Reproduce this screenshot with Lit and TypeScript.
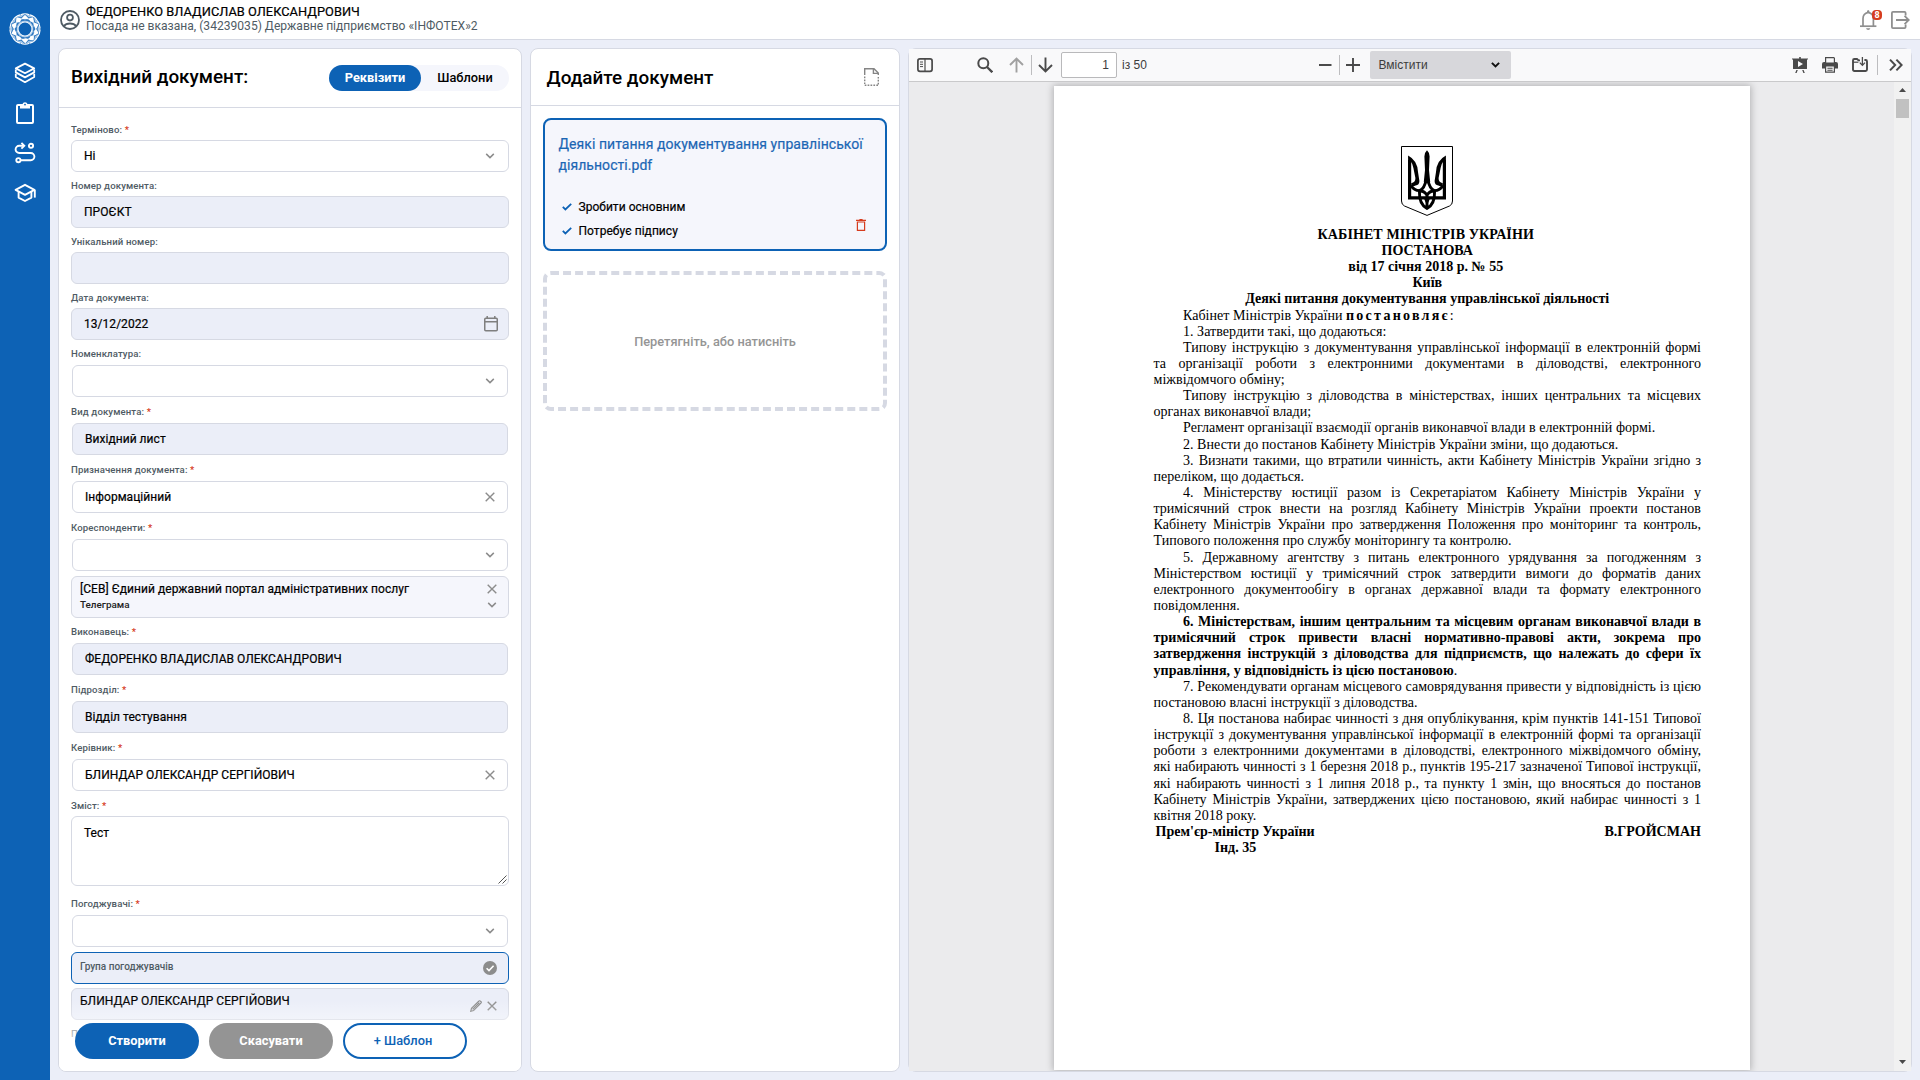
import { LitElement, html, css, svg, nothing, TemplateResult } from "lit";
import { customElement } from "lit/decorators.js";

const chevron = html`<svg class="chev" width="10" height="6" viewBox="0 0 10 6" fill="none" stroke="#8c8c8c" stroke-width="1.5"><path d="M1.2 .9 5 4.6 8.8 .9" /></svg>`;
const cross = html`<svg class="cross" width="10" height="10" viewBox="0 0 10 10" fill="none" stroke="#8c8c8c" stroke-width="1.4"><path d="M.7 .7 9.3 9.3M9.3 .7 .7 9.3" /></svg>`;
const calendar = html`<svg class="cal" width="14" height="16" viewBox="0 0 14 16" fill="none" stroke="#7f7f7f" stroke-width="1.5"><rect x=".75" y="2.2" width="12.5" height="12.6" rx="1" /><path d="M.7 5.8H13.3M3.2 0V2.5M10.8 0V2.5" /></svg>`;

type Kind = "input" | "select";
interface Field {
  label: string;
  required?: boolean;
  kind: Kind;
  value?: string;
  locked?: boolean;
  icon?: TemplateResult;
}

const FIELDS_TOP: Field[] = [
  { label: "Терміново", required: true, kind: "input", value: "Ні", icon: chevron },
  { label: "Номер документа", kind: "input", value: "ПРОЄКТ", locked: true },
  { label: "Унікальний номер", kind: "input", locked: true },
  { label: "Дата документа", kind: "input", value: "13/12/2022", locked: true, icon: calendar },
  { label: "Номенклатура", kind: "select", icon: chevron },
  { label: "Вид документа", required: true, kind: "select", value: "Вихідний лист", locked: true },
  { label: "Призначення документа", required: true, kind: "select", value: "Інформаційний", icon: cross },
  { label: "Кореспонденти", required: true, kind: "select", icon: chevron },
];

const FIELDS_MIDDLE: Field[] = [
  { label: "Виконавець", required: true, kind: "select", value: "ФЕДОРЕНКО ВЛАДИСЛАВ ОЛЕКСАНДРОВИЧ", locked: true },
  { label: "Підрозділ", required: true, kind: "select", value: "Відділ тестування", locked: true },
  { label: "Керівник", required: true, kind: "select", value: "БЛИНДАР ОЛЕКСАНДР СЕРГІЙОВИЧ", icon: cross },
];

@customElement("side-nav")
class SideNav extends LitElement {
  static styles = css`
    :host { display: flex; flex-direction: column; align-items: center; width: 50px; background: #0d62b5; padding-top: 13px; box-sizing: border-box; }
    .logo { display: block; width: 32px; height: 32px; margin-bottom: 8px; }
    .item { display: flex; align-items: center; justify-content: center; width: 50px; height: 40px; }
  `;
  render() {
    const ring = Array.from({ length: 10 }, (_, i) => i * 36);
    return html`
      <svg class="logo" viewBox="-16 -16 32 32" fill="none" stroke="#fff">
        <circle r="10.9" stroke="#a4c5e6" stroke-width="7.4" />
        ${ring.map((a) => svg`<g transform="rotate(${a})">
          <path d="M-4.4 -14.2Q0 -16.2 4.4 -14.2" stroke-width="1.2" />
          <path d="M-8.6 -11.8Q2.4 -12 8.8 -3.6" stroke="#2f79c0" stroke-width=".8" />
          <path d="M8.6 -11.8Q-2.4 -12 -8.8 -3.6" stroke="#2f79c0" stroke-width=".8" />
          <path d="M0 -14.4 3.4 -10.6 0 -8.4 -3.4 -10.6Z" fill="#fff" stroke="none" />
        </g>`)}
        <circle r="7" fill="#0d62b5" stroke="#f2f7fc" stroke-width="1.2" />
      </svg>
      <div class="item">
        <svg width="22" height="22" viewBox="0 0 22 22" fill="none" stroke="#fff" stroke-width="1.8" stroke-linejoin="round"><path d="M11 1.6 20.2 6.4 11 11.2 1.8 6.4Z" /><path d="M1.8 7.4V10.4L11 15.4 20.2 10.4V7.4" /><path d="M1.8 11.8V15L11 20.2 20.2 15V11.8" /></svg>
      </div>
      <div class="item">
        <svg width="20" height="24" viewBox="0 0 20 24" fill="none" stroke="#fff" stroke-width="2"><rect x="2" y="4" width="16" height="18" rx="1" /><path fill="#fff" stroke="none" d="M5 3.2H7.4A2.7 2.7 0 0 1 12.6 3.2H15V7.4H5Z" /><circle cx="10" cy="3.6" r=".9" fill="#0d62b5" stroke="none" /></svg>
      </div>
      <div class="item">
        <svg width="22" height="22" viewBox="0 0 22 22" fill="none" stroke="#fff" stroke-width="1.9"><path d="M9.6 3.8H5.2a3.6 3.6 0 0 0 0 7.2H16.8a3.6 3.6 0 0 1 0 7.2H7" /><path d="M7.4 .9 10.3 3.8 7.4 6.7" /><circle cx="17" cy="3.8" r="2.1" /><circle cx="4.4" cy="18.2" r="2.1" /></svg>
      </div>
      <div class="item">
        <svg width="24" height="20" viewBox="0 0 24 20" fill="none" stroke="#fff" stroke-width="1.9" stroke-linejoin="round"><path d="M12 1.8 2.6 6.8 12 11.8 21.4 6.8Z" /><path d="M5.6 9V14.6L12 18 18.4 14.6V9" /><path d="M21.8 6.8V14.6" /></svg>
      </div>
    `;
  }
}

@customElement("top-bar")
class TopBar extends LitElement {
  static styles = css`
    :host { display: flex; align-items: center; height: 40px; box-sizing: border-box; background: #fff; border-bottom: 1px solid #d6d9e3; padding: 0 10px; font-family: Roboto, "Liberation Sans", sans-serif; }
    .avatar { display: block; margin-right: 6px; }
    .who { display: flex; flex-direction: column; flex: 1; line-height: 15px; padding-bottom: 1px; }
    .name { font-size: 12.8px; letter-spacing: .04px; color: #000; -webkit-text-stroke: .2px #000; }
    .post { font-size: 12.08px; color: #4f5b64; }
    .bell { position: relative; width: 24px; height: 22px; margin-right: 7px; }
    .bell-icon { display: block; }
    .badge { position: absolute; left: 12px; top: 1px; width: 10px; height: 10px; border-radius: 4px; background: #d63c1e; color: #fff; font-size: 9px; font-weight: 700; line-height: 10px; text-align: center; }
    .exit { display: block; }
  `;
  render() {
    return html`
      <svg class="avatar" width="20" height="20" viewBox="0 0 20 20" fill="none" stroke="#4f5b64" stroke-width="1.8"><circle cx="10" cy="10" r="9" /><circle cx="10" cy="7.6" r="2.9" /><path d="M3.8 16.2C6.5 12.6 13.5 12.6 16.2 16.2" /></svg>
      <div class="who">
        <span class="name">ФЕДОРЕНКО ВЛАДИСЛАВ ОЛЕКСАНДРОВИЧ</span>
        <span class="post">Посада не вказана, (34239035) Державне підприємство «ІНФОТЕХ»2</span>
      </div>
      <div class="bell">
        <svg class="bell-icon" width="17" height="22" viewBox="0 0 17 22" fill="none" stroke="#8f8f8f" stroke-width="1.7"><path d="M3 17V9.5Q3 4.6 8.2 3.4 13.4 4.6 13.4 9.5V17" /><path d="M0 17.2H16.4" /><path d="M6 19.2H10.4Q10 21 8.2 21 6.4 21 6 19.2ZM6.8 3.6Q6.8 1 8.2 1 9.6 1 9.6 3.6Z" fill="#8f8f8f" stroke="none" /></svg>
        <span class="badge">8</span>
      </div>
      <svg class="exit" width="19" height="18" viewBox="0 0 19 18" fill="none" stroke="#8f8f8f" stroke-width="1.8"><path d="M14.6 4.6V2Q14.6 .9 13.5 .9H2Q.9 .9 .9 2V16Q.9 17.1 2 17.1H13.5Q14.6 17.1 14.6 16V13.4" /><path d="M5 9H17.4M13.6 4.8 17.8 9 13.6 13.2" /></svg>
    `;
  }
}

@customElement("requisites-panel")
class RequisitesPanel extends LitElement {
  static styles = css`
    :host { display: flex; flex-direction: column; position: relative; width: 464px; box-sizing: border-box; background: #fff; border: 1px solid #d6d9e3; border-radius: 8px; overflow: hidden; font-family: Roboto, "Liberation Sans", sans-serif; color: #000; }
    .head { display: flex; align-items: center; justify-content: space-between; height: 58px; flex: none; padding: 0 12px; border-bottom: 1px solid #d6d9e3; }
    .title { font-size: 18.9px; font-weight: 500; padding-bottom: 4px; }
    .tabs { display: flex; width: 180px; height: 26px; border-radius: 13px; background: #f5f6fc; font-size: 12.8px; }
    .tab { flex: 1; line-height: 26px; text-align: center; border-radius: 13px; font-weight: 500; }
    .tab.active { flex: none; width: 92px; background: #0d62b5; color: #fff; font-weight: 700; }
    .form { display: flex; flex-direction: column; padding: 8px 12px 0; flex: 1; min-height: 0; overflow: hidden; }
    .label { height: 16px; padding-top: 8px; line-height: 12px; font-size: 9.6px; letter-spacing: .12px; font-weight: 500; color: #4f5b64; flex: none; }
    .req { color: #d63c1e; }
    .box { display: flex; align-items: center; height: 32px; flex: none; box-sizing: border-box; padding: 0 10px 0 12px; border: 1px solid #d6d9e3; border-radius: 6px; }
    .box.select { margin: 1px; padding-right: 12px; }
    .box.input .chev { margin-right: 3px; }
    .box.locked { background: #ebeef8; }
    .value, .chip-title, .area { font-size: 12px; letter-spacing: .04px; line-height: 16px; -webkit-text-stroke: .2px #000; }
    .value { flex: 1; padding-bottom: 1px; }
    .chip { display: flex; flex: none; box-sizing: border-box; margin-top: 4px; border: 1px solid #d6d9e3; border-radius: 6px; padding: 0 11px 0 8px; background: #f5f6fc; }
    .chip.tall { height: 42px; }
    .chip.group { height: 32px; background: #ebeef8; border-color: #0d62b5; align-items: center; }
    .chip.person { height: 32px; background: #ebeef8; }
    .chip-text { display: flex; flex-direction: column; flex: 1; padding-top: 4px; }
    .chip-note { font-size: 9.9px; font-weight: 500; line-height: 15px; color: #222; }
    .chip-side { display: flex; flex-direction: column; align-items: center; padding-top: 7px; gap: 8px; }
    .chip-row { display: flex; align-items: center; gap: 5px; padding-top: 3px; }
    .group-name { flex: 1; font-size: 10px; font-weight: 500; color: #4f5b64; padding-bottom: 3px; }
    .area { position: relative; height: 70px; margin-bottom: 4px; box-sizing: border-box; flex: none; border: 1px solid #d6d9e3; border-radius: 6px; padding: 8px 12px; }
    .grip { position: absolute; right: 1px; bottom: 1px; }
    .foot { position: absolute; left: 0; right: 0; bottom: 0; height: 71px; box-sizing: border-box; padding: 23px 16px 0; display: flex; gap: 10px; background: linear-gradient(rgba(255, 255, 255, 0), rgba(255, 255, 255, .6) 48%, #fff 75%); }
    .btn { width: 124px; height: 36px; box-sizing: border-box; border-radius: 18px; line-height: 36px; text-align: center; color: #fff; font-size: 12.8px; font-weight: 700; }
    .btn.main { background: #0d62b5; }
    .btn.mute { background: #949494; }
    .btn.line { background: #fff; border: 2px solid #0d62b5; color: #0d62b5; font-weight: 500; line-height: 32px; padding-right: 4px; }
  `;
  private label(text: string, required?: boolean) {
    return html`<div class="label">${text}: ${required ? html`<span class="req">*</span>` : nothing}</div>`;
  }
  private field(f: Field) {
    return html`${this.label(f.label, f.required)}
      <div class="box ${f.kind} ${f.locked ? "locked" : ""}"><span class="value">${f.value ?? nothing}</span>${f.icon ?? nothing}</div>`;
  }
  render() {
    return html`
      <div class="head">
        <span class="title">Вихідний документ:</span>
        <div class="tabs"><span class="tab active">Реквізити</span><span class="tab">Шаблони</span></div>
      </div>
      <div class="form">
        ${FIELDS_TOP.map((f) => this.field(f))}
        <div class="chip tall">
          <div class="chip-text">
            <span class="chip-title">[СЕВ] Єдиний державний портал адміністративних послуг</span>
            <span class="chip-note">Телеграма</span>
          </div>
          <div class="chip-side">${cross}${chevron}</div>
        </div>
        ${FIELDS_MIDDLE.map((f) => this.field(f))}
        ${this.label("Зміст", true)}
        <div class="area">Тест<svg class="grip" width="9" height="9" viewBox="0 0 9 9" stroke="#555" stroke-width="1"><path d="M.5 8.5 8.5 .5M4.5 8.5 8.5 4.5" /></svg></div>
        ${this.field({ label: "Погоджувачі", required: true, kind: "select", icon: chevron })}
        <div class="chip group">
          <span class="group-name">Група погоджувачів</span>
          <svg width="14" height="14" viewBox="0 0 14 14"><circle cx="7" cy="7" r="7" fill="#8c8c8c" /><path d="M3.6 7.2 6 9.6 10.6 4.8" fill="none" stroke="#fff" stroke-width="1.6" /></svg>
        </div>
        <div class="chip person">
          <div class="chip-text"><span class="chip-title">БЛИНДАР ОЛЕКСАНДР СЕРГІЙОВИЧ</span></div>
          <div class="chip-row">
            <svg width="12" height="12" viewBox="0 0 12 12" fill="none" stroke="#858585" stroke-width="1.2"><path d="M.7 11.3 1.5 8.4 8.8 1.1Q9.6 .4 10.4 1.1L11 1.7Q11.6 2.4 10.9 3.2L3.6 10.5ZM2.6 9.4 9.4 2.6" /></svg>
            ${cross}
          </div>
        </div>
        <div class="label">П</div>
      </div>
      <div class="foot">
        <div class="btn main">Створити</div>
        <div class="btn mute">Скасувати</div>
        <div class="btn line">+ Шаблон</div>
      </div>
    `;
  }
}

@customElement("files-panel")
class FilesPanel extends LitElement {
  static styles = css`
    :host { display: flex; flex-direction: column; width: 370px; box-sizing: border-box; background: #fff; border: 1px solid #d6d9e3; border-radius: 8px; font-family: Roboto, "Liberation Sans", sans-serif; color: #000; }
    .head { display: flex; align-items: center; justify-content: space-between; height: 56px; padding: 0 20px 0 15.5px; border-bottom: 1px solid #d6d9e3; }
    .title { font-size: 18.9px; font-weight: 500; }
    .body { display: flex; flex-direction: column; gap: 20px; padding: 12px; }
    .card { display: flex; flex-direction: column; height: 133px; box-sizing: border-box; border: 2px solid #0d62b5; border-radius: 8px; background: #f5f6fc; padding: 14px 13.5px 0; }
    .file { font-size: 14px; letter-spacing: .05px; -webkit-text-stroke: .2px #1c66b4; line-height: 21px; color: #1c66b4; height: 61px; }
    .opts { display: flex; align-items: center; justify-content: space-between; }
    .list { display: flex; flex-direction: column; }
    .opt { display: flex; align-items: center; height: 24px; gap: 7px; padding-left: 3px; font-size: 12px; letter-spacing: .04px; -webkit-text-stroke: .2px #000; }
    .bin { margin: 11px 5.5px 0 0; }
    .drop { display: flex; align-items: center; justify-content: center; height: 140px; box-sizing: border-box; border: 4px dashed #d6d9e3; border-radius: 8px; font-size: 12.8px; font-weight: 500; color: #959595; }
  `;
  render() {
    const tick = html`<svg width="10" height="8" viewBox="0 0 10 8" fill="none" stroke="#0d62b5" stroke-width="1.8"><path d="M.8 3.8 3.4 6.4 9.2 .9" /></svg>`;
    return html`
      <div class="head">
        <span class="title">Додайте документ</span>
        <svg width="15" height="18" viewBox="0 0 15 18" fill="none" stroke="#858585" stroke-width="1.4"><path d="M.7 7V.7H10L14.3 5V7M9.4 .8V5.4H14.2" /><path d="M.7 8.6V17.3H14.3V8.6" stroke-dasharray="1.7 1.2" /></svg>
      </div>
      <div class="body">
        <div class="card">
          <div class="file">Деякі питання документування управлінської діяльності.pdf</div>
          <div class="opts">
            <div class="list">
              <div class="opt">${tick}<span>Зробити основним</span></div>
              <div class="opt">${tick}<span>Потребує підпису</span></div>
            </div>
            <svg class="bin" width="10" height="12" viewBox="0 0 10 12" fill="none" stroke="#d63c1e" stroke-width="1.2"><path d="M0 1.3H10M3.4 .6H6.6M1.4 3V11.3H8.6V3Z" /></svg>
          </div>
        </div>
        <div class="drop">Перетягніть, або натисніть</div>
      </div>
    `;
  }
}

interface Line {
  t: string;
  indent?: boolean;
  justify?: boolean;
  bold?: boolean;
}
const j = (t: string, indent = false, bold = false): Line => ({ t, indent, bold, justify: true });
const n = (t: string, indent = false): Line => ({ t, indent });

const LINES: Line[] = [
  n("1. Затвердити такі, що додаються:", true),
  j("Типову інструкцію з документування управлінської інформації в електронній формі", true),
  j("та організації роботи з електронними документами в діловодстві, електронного"),
  n("міжвідомчого обміну;"),
  j("Типову інструкцію з діловодства в міністерствах, інших центральних та місцевих", true),
  n("органах виконавчої влади;"),
  n("Регламент організації взаємодії органів виконавчої влади в електронній формі.", true),
  n("2. Внести до постанов Кабінету Міністрів України зміни, що додаються.", true),
  j("3. Визнати такими, що втратили чинність, акти Кабінету Міністрів України згідно з", true),
  n("переліком, що додається."),
  j("4. Міністерству юстиції разом із Секретаріатом Кабінету Міністрів України у", true),
  j("тримісячний строк внести на розгляд Кабінету Міністрів України проекти постанов"),
  j("Кабінету Міністрів України про затвердження Положення про моніторинг та контроль,"),
  n("Типового положення про службу моніторингу та контролю."),
  j("5. Державному агентству з питань електронного урядування за погодженням з", true),
  j("Міністерством юстиції у тримісячний строк затвердити вимоги до форматів даних"),
  j("електронного документообігу в органах державної влади та формату електронного"),
  n("повідомлення."),
  j("6. Міністерствам, іншим центральним та місцевим органам виконавчої влади в", true, true),
  j("тримісячний строк привести власні нормативно-правові акти, зокрема про", false, true),
  j("затвердження інструкцій з діловодства для підприємств, що належать до сфери їх", false, true),
];

const LINES_END: Line[] = [
  j("7. Рекомендувати органам місцевого самоврядування привести у відповідність із цією", true),
  n("постановою власні інструкції з діловодства."),
  j("8. Ця постанова набирає чинності з дня опублікування, крім пунктів 141-151 Типової", true),
  j("інструкції з документування управлінської інформації в електронній формі та організації"),
  j("роботи з електронними документами в діловодстві, електронного міжвідомчого обміну,"),
  j("які набирають чинності з 1 березня 2018 р., пунктів 195-217 зазначеної Типової інструкції,"),
  j("які набирають чинності з 1 липня 2018 р., та пункту 1 змін, що вносяться до постанов"),
  j("Кабінету Міністрів України, затверджених цією постановою, який набирає чинності з 1"),
  n("квітня 2018 року."),
];

@customElement("decree-page")
class DecreePage extends LitElement {
  static styles = css`
    :host { display: flex; flex-direction: column; width: 696px; height: 984px; flex: none; box-sizing: border-box; background: #fff; padding: 60px 49px 0 99.5px; box-shadow: 0 0 7px 1px rgba(0, 0, 0, .25); font-family: "Liberation Serif", serif; font-size: 14.04px; line-height: 16.14px; color: #000; }
    .arms { display: block; align-self: center; flex: none; margin: 0 0 9.8px; }
    .center { text-align: center; font-weight: 700; }
    .center.caps { letter-spacing: .08px; padding-right: 3px; }
    .center.date { padding-right: 3px; }
    .line { white-space: nowrap; }
    .indent { padding-left: 29.5px; }
    .justify { text-align: justify; text-align-last: justify; }
    .loose { letter-spacing: .025px; }
    .bold, b { font-weight: 700; }
    .spread { letter-spacing: 2.25px; }
    .sign { display: flex; justify-content: space-between; font-weight: 700; padding-left: 2px; }
    .index { padding-left: 61px; font-weight: 700; }
  `;
  private line(l: Line) {
    return html`<div class="line ${l.indent ? "indent" : ""} ${l.justify ? "justify" : "loose"} ${l.bold ? "bold" : ""}">${l.t}</div>`;
  }
  render() {
    return html`
      <svg class="arms" width="52" height="70" viewBox="0 0 52 70" fill="none" stroke="#000">
        <path d="M.5 .5H51.5V55Q51.5 58.6 48.5 60L26 69.4 3.5 60Q.5 58.6 .5 55Z" stroke-width="1" />
        <path d="M8.6 14V51.8H43.4V14" stroke-width="3.2" />
        <path d="M7.1 9.6Q16.4 14.5 17 26L18.4 35Q18.4 39 14.6 39.6L10.2 41.2V37.2Q14.6 36.4 14.4 32L12.4 22Q11.6 17.5 10.2 16.2L7.1 16.4ZM44.9 9.6Q35.6 14.5 35 26L33.6 35Q33.6 39 37.4 39.6L41.8 41.2V37.2Q37.4 36.4 37.6 32L39.6 22Q40.4 17.5 41.8 16.2L44.9 16.4Z" fill="#000" stroke="none" />
        <path d="M10 39.4Q13 44.4 18.5 44.6 23.6 43 25.2 33M42 39.4Q39 44.4 33.5 44.6 28.4 43 26.8 33" stroke-width="2.9" />
        <path d="M26 4.2Q28.8 6.8 28.6 10.5L28 24 29.2 36Q27.6 35 26 37.8 24.4 35 22.8 36L24 24 23.4 10.5Q23.2 6.8 26 4.2Z" fill="#000" stroke="none" />
        <path d="M18.4 45Q18 58.4 26 62.4 34 58.4 33.6 45Q28.4 44.6 26 49.4 23.6 44.6 18.4 45ZM26 48V62.8" stroke-width="2.9" />
        <path d="M23.2 53Q24.2 56 26 58.6 27.8 56 28.8 53Z" fill="#000" stroke="none" />
      </svg>
      <div class="center caps">КАБІНЕТ МІНІСТРІВ УКРАЇНИ</div>
      <div class="center">ПОСТАНОВА</div>
      <div class="center date">від 17 січня 2018 р. № 55</div>
      <div class="center">Київ</div>
      <div class="center">Деякі питання документування управлінської діяльності</div>
      <div class="line indent loose">Кабінет Міністрів України <b class="spread">постановляє</b>:</div>
      ${LINES.map((l) => this.line(l))}
      <div class="line loose"><b>управління, у відповідність із цією постановою</b>.</div>
      ${LINES_END.map((l) => this.line(l))}
      <div class="sign"><span>Прем'єр-міністр України</span><span>В.ГРОЙСМАН</span></div>
      <div class="index">Інд. 35</div>
    `;
  }
}

@customElement("pdf-viewer")
class PdfViewer extends LitElement {
  static styles = css`
    :host { display: flex; flex-direction: column; flex: 1; box-sizing: border-box; border: 1px solid #d6d9e3; border-radius: 8px; font-family: "Liberation Sans", sans-serif; font-size: 12px; color: #3c3c3c; }
    .bar { display: grid; grid-template-columns: 400px 1fr 124px; align-items: center; height: 32px; flex: none; background: #f9f9fa; border-bottom: 1px solid #c9c9cb; }
    .set { display: flex; align-items: center; }
    .start { padding-left: 8px; }
    .find { margin-left: 44px; }
    .up { margin-left: 16px; }
    .sep { width: 1px; height: 20px; background: #bdbdbf; }
    .sep.a { margin: 0 6px 0 7px; }
    .sep.b { margin: 0 11px 0 9px; }
    .page-no { box-sizing: border-box; width: 56px; height: 26px; margin-left: 8px; border: 1px solid #b9b9bb; border-radius: 2px; background: #fff; line-height: 24px; padding-right: 7px; text-align: right; }
    .total { margin-left: 5px; }
    .mid { padding-left: 9.5px; }
    .zoom { display: flex; align-items: center; justify-content: space-between; box-sizing: border-box; width: 141px; height: 28px; margin-left: 10px; padding: 0 11px 0 9px; background: #d7d7db; border-radius: 2px; }
    .end { padding-left: 5px; }
    .next { margin-left: 14px; }
    .ic { display: block; flex: none; }
    .view { display: flex; flex: 1; min-height: 0; background: #ebebed; }
    .canvas { display: flex; flex: 1; justify-content: center; align-items: flex-start; overflow: hidden; padding: 4px 1px 0 2px; }
    .scroll { display: flex; flex-direction: column; align-items: center; width: 17px; background: #f1f1f1; padding: 6px 0 7px; box-sizing: border-box; }
    .thumb { width: 13px; height: 19px; background: #c1c1c1; margin: 7px 0 auto; }
  `;
  render() {
    return html`
      <div class="bar">
        <div class="set start">
          <svg class="ic" width="16" height="16" viewBox="0 0 16 16" fill="none" stroke="#4a4a4a" stroke-width="1.7"><rect x=".9" y="1.9" width="14.2" height="12.4" rx="2" /><path d="M8 2V14" stroke-width="1.2" /><path d="M3 5H6M3 7.3H6M3 9.6H6" stroke-width="1" /></svg>
          <svg class="ic find" width="16" height="16" viewBox="0 0 16 16" fill="none" stroke="#4a4a4a" stroke-width="2"><circle cx="6.3" cy="6.3" r="5" /><path d="M10 10 15.3 15.3" stroke-width="2.3" /></svg>
          <svg class="ic up" width="15" height="16" viewBox="0 0 15 16" fill="none" stroke="#a0a0a0" stroke-width="1.9"><path d="M7.5 15.5V1.8M1 8 7.5 1.6 14 8" /></svg>
          <span class="sep a"></span>
          <svg class="ic" width="15" height="16" viewBox="0 0 15 16" fill="none" stroke="#4a4a4a" stroke-width="1.9"><path d="M7.5 .5V14.2M1 8 7.5 14.4 14 8" /></svg>
          <span class="page-no">1</span>
          <span class="total">із 50</span>
        </div>
        <div class="set mid">
          <svg class="ic" width="13" height="14" viewBox="0 0 13 14" stroke="#4a4a4a" stroke-width="2"><path d="M0 7H12.5" /></svg>
          <span class="sep a"></span>
          <svg class="ic" width="14" height="14" viewBox="0 0 14 14" stroke="#4a4a4a" stroke-width="1.9"><path d="M0 7H14M7 0V14" /></svg>
          <span class="zoom">Вмістити<svg class="ic" width="9" height="6" viewBox="0 0 9 6" fill="none" stroke="#111" stroke-width="2"><path d="M.9 .9 4.5 4.4 8.1 .9" /></svg></span>
        </div>
        <div class="set end">
          <svg class="ic" width="16" height="16" viewBox="0 0 16 16" fill="#4a4a4a"><path d="M0 1.4H7.2V0H8.8V1.4H16V2.6H15V11.4Q15 12 14.4 12H1.6Q1 12 1 11.4V2.6H0ZM6 4V10L11 7Z" fill-rule="evenodd" /><path d="M4.4 13H5.8L4.6 16H3.2ZM10.2 13H11.6L12.8 16H11.4Z" /></svg>
          <svg class="ic next" width="16" height="16" viewBox="0 0 16 16" fill="#4a4a4a"><path d="M3 0H12L13 1V5H14Q16 5 16 7V11.4H13V15.8H3V11.4H0V7Q0 5 2 5H3ZM4.2 1.2V5.6H11.8V1.2ZM4.2 9.6V14.6H11.8V9.6Z" fill-rule="evenodd" /><path d="M5.4 10.7H10.6V11.7H5.4ZM5.4 12.7H10.6V13.7H5.4Z" /></svg>
          <svg class="ic next" width="16" height="16" viewBox="0 0 16 16" fill="none" stroke="#4a4a4a" stroke-width="1.9"><path d="M12.4 3H13.6Q15 3 15 4.4V12.6Q15 14 13.6 14H2.4Q1 14 1 12.6V3.4Q1 2 2.4 2H5L6.6 3.4H8" /><path d="M1 5.2H6.4" stroke-width="1.2" /><path d="M10.4 0V8M7.8 5.6 10.4 8.4 13 5.6" stroke-width="1.3" /></svg>
          <span class="sep b"></span>
          <svg class="ic" width="14" height="14" viewBox="0 0 14 14" fill="none" stroke="#4a4a4a" stroke-width="2"><path d="M1 1.6 6.2 7 1 12.4M7.4 1.6 12.6 7 7.4 12.4" /></svg>
        </div>
      </div>
      <div class="view">
        <div class="canvas"><decree-page></decree-page></div>
        <div class="scroll">
          <svg class="ic" width="7" height="4" viewBox="0 0 7 4" fill="#4a4a4a"><path d="M0 4 3.5 0 7 4Z" /></svg>
          <span class="thumb"></span>
          <svg class="ic" width="7" height="4" viewBox="0 0 7 4" fill="#4a4a4a"><path d="M0 0 3.5 4 7 0Z" /></svg>
        </div>
      </div>
    `;
  }
}

@customElement("app-root")
class AppRoot extends LitElement {
  static styles = css`
    :host { display: flex; width: 1920px; height: 1080px; overflow: hidden; background: #ebeef8; }
    .main { display: flex; flex-direction: column; flex: 1; min-width: 0; }
    .work { display: flex; gap: 8px; flex: 1; min-height: 0; padding: 8px; }
  `;
  render() {
    return html`
      <side-nav></side-nav>
      <div class="main">
        <top-bar></top-bar>
        <div class="work">
          <requisites-panel></requisites-panel>
          <files-panel></files-panel>
          <pdf-viewer></pdf-viewer>
        </div>
      </div>
    `;
  }
}
